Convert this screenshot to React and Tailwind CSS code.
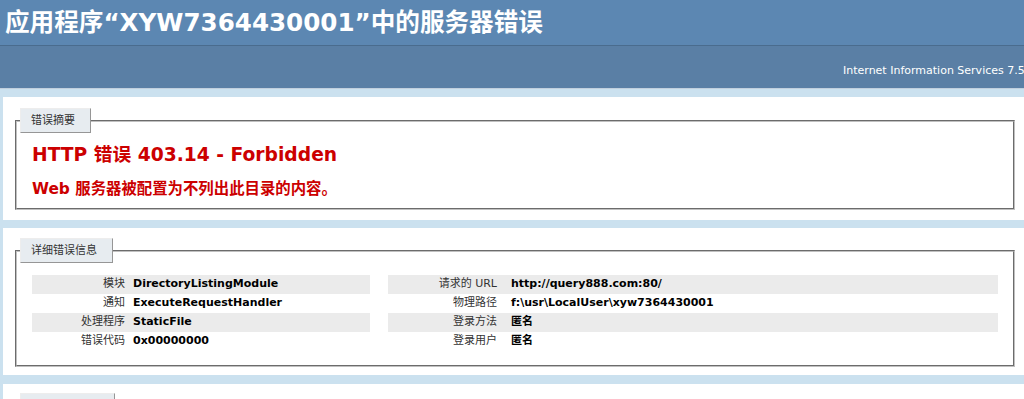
export default function App() {
  const left = [
    ['模块', 'DirectoryListingModule'],
    ['通知', 'ExecuteRequestHandler'],
    ['处理程序', 'StaticFile'],
    ['错误代码', '0x00000000'],
  ];
  const right = [
    ['请求的 URL', 'http://query888.com:80/'],
    ['物理路径', 'f:\\usr\\LocalUser\\xyw7364430001'],
    ['登录方法', '匿名'],
    ['登录用户', '匿名'],
  ];
  const legendCls =
    "-ml-[12px] pl-[10px] pr-[15px] py-[4px] leading-[15px] text-[11px] text-[#333333] bg-[#E7ECF0] border-t border-l border-t-[#EDEDED] border-l-[#EDEDED] border-r border-b border-r-[#969696] border-b-[#969696]";
  const fieldsetCls =
    "w-[1000px] px-[15px] border-2 [border-style:groove] border-[#c0c0c0]";

  return (
    <div className="w-[1024px] h-[399px] overflow-hidden bg-[#CBE1EF] font-['DejaVu_Sans','Noto_Sans_CJK_SC',sans-serif] text-[11px]">
      {/* Header */}
      <div className="h-[45px] bg-[#5C87B2] flex items-center pl-[5px] pt-[1px]">
        <h1 className="text-[24.6px] font-bold text-white leading-none whitespace-nowrap">
          应用程序“XYW7364430001”中的服务器错误
        </h1>
      </div>
      {/* Server version */}
      <div className="h-[44px] bg-[#5A7FA5] border-t border-t-[#4A6C8E] border-b border-b-[#C1CFDD] pt-[18px] pl-[843px] text-white text-[11px] leading-[14px] whitespace-nowrap">
        Internet Information Services 7.5
      </div>

      {/* Summary panel */}
      <div className="mt-[8px] ml-[3px] bg-white pt-[11px] pb-[10px] pl-[12px]">
        <fieldset className={fieldsetCls + " pb-[9px]"}>
          <legend className={legendCls}>错误摘要</legend>
          <h2 className="mt-[11px] text-[18.7px] leading-[22px] font-bold text-[#CC0000] whitespace-nowrap">
            HTTP 错误 403.14 - Forbidden
          </h2>
          <h3 className="mt-[13px] text-[15.4px] leading-[20px] font-bold text-[#CC0000] whitespace-nowrap">
            Web 服务器被配置为不列出此目录的内容。
          </h3>
        </fieldset>
      </div>

      {/* Detail panel */}
      <div className="mt-[8px] ml-[3px] bg-white pt-[10px] pb-[8px] pl-[12px]">
        <fieldset className={fieldsetCls + " pb-[14px]"}>
          <legend className={legendCls}>详细错误信息</legend>
          <div className="mt-[12px] flex gap-[18px]">
            <div className="w-[338px] flex flex-col">
              {left.map(([k, v], i) => (
                <div
                  key={k}
                  className={
                    "h-[19px] flex items-center gap-[8px] " +
                    (i % 2 === 0 ? "bg-[#ebebeb]" : "")
                  }
                >
                  <div className="w-[93px] text-right text-[#333333] whitespace-nowrap">{k}</div>
                  <div className="font-bold text-black whitespace-nowrap">{v}</div>
                </div>
              ))}
            </div>
            <div className="w-[610px] flex flex-col">
              {right.map(([k, v], i) => (
                <div
                  key={k}
                  className={
                    "h-[19px] flex items-center gap-[14px] " +
                    (i % 2 === 0 ? "bg-[#ebebeb]" : "")
                  }
                >
                  <div className="w-[109px] text-right text-[#333333] whitespace-nowrap">{k}</div>
                  <div className="font-bold text-black whitespace-nowrap">{v}</div>
                </div>
              ))}
            </div>
          </div>
        </fieldset>
      </div>

      {/* Third panel */}
      <div className="mt-[9px] ml-[3px] bg-white pt-[9px] pb-[10px] pl-[12px]">
        <fieldset className={fieldsetCls + " pb-[14px]"}>
          <legend className={legendCls + " w-[95px] h-[25px]"}></legend>
          <div className="h-[40px]"></div>
        </fieldset>
      </div>
    </div>
  );
}
